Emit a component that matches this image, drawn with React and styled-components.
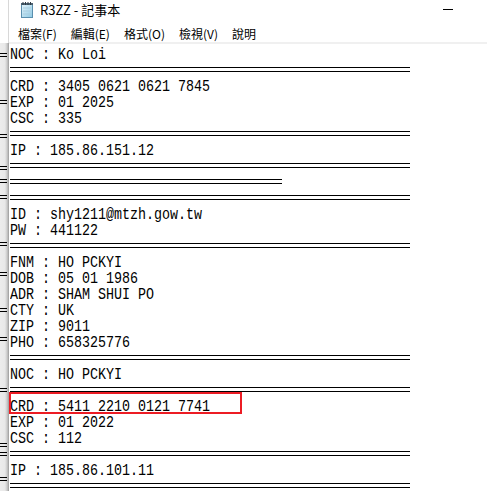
import React from 'react';
import styled, { createGlobalStyle } from 'styled-components';

const GlobalStyle = createGlobalStyle`
  html, body { margin: 0; padding: 0; background: #ffffff; }
  body { font-family: "Noto Sans CJK TC", "Noto Sans", sans-serif; }
`;

const Screen = styled.div`
  display: flex;
  width: 487px;
  height: 491px;
  overflow: hidden;
  background: #ffffff;
`;

const BackWindow = styled.div`
  flex: 0 0 9px;
  display: flex;
  flex-direction: column;
`;

const BackTop = styled.div`
  height: 43px;
  background: #ffffff;
  border-right: 1px solid #d8d8d8;
  box-sizing: border-box;
`;

const BackBody = styled.div`
  flex: 1;
  display: flex;
  flex-direction: column;
  padding-top: 1px;
  background: linear-gradient(to right, #ececec 0%, #e8e8e8 55%, #c8c8c8 80%, #9a9a9a 100%);
`;

const BackRule = styled.div`
  flex: 0 0 auto;
  width: 7px;
  height: 4px;
  margin-top: ${p => p.$gap}px;
  box-sizing: border-box;
  border-top: 1px solid #000;
  border-bottom: 1px solid #000;
`;

const Window = styled.div`
  flex: 1;
  display: flex;
  flex-direction: column;
  min-width: 0;
`;

const TitleBar = styled.div`
  height: 26px;
  display: flex;
  align-items: center;
  padding-left: 11px;
  padding-bottom: 6px;
  box-sizing: border-box;
`;

const Title = styled.span`
  margin-left: 6px;
  font-size: 13px;
  color: #000;
  white-space: nowrap;
`;

const Caption = styled.div`
  margin-left: auto;
  display: flex;
  padding-right: 16px;
  align-self: flex-start;
`;

const CaptionButton = styled.div`
  width: 46px;
  height: 19px;
  display: flex;
  align-items: center;
  justify-content: center;
`;

const MinGlyph = styled.div`
  width: 10px;
  height: 1px;
  background: #000;
`;

const MenuBar = styled.div`
  height: 19px;
  display: flex;
  align-items: center;
  padding-left: 2px;
  border-bottom: 2px solid #f0f0f0;
  box-sizing: border-box;
`;

const MenuItem = styled.span`
  padding: 0 7px;
  font-size: 12px;
  color: #000;
  white-space: nowrap;
`;

const Editor = styled.div`
  flex: 1;
  padding-left: 1px;
  background: #ffffff;
`;

const TextRow = styled.div`
  position: relative;
  height: 16px;
  line-height: 16px;
  white-space: pre;
  color: #000;
`;

const Glyphs = styled.span`
  display: inline-block;
  font-family: "Liberation Mono", "DejaVu Sans Mono", monospace;
  font-size: 16px;
  transform: scaleX(0.8333);
  transform-origin: left center;
`;

const RuleRow = styled.div`
  height: 16px;
  box-sizing: border-box;
  padding-top: 7px;
`;

const DoubleRule = styled.div`
  width: ${p => p.$w}px;
  height: 5px;
  box-sizing: border-box;
  border-top: 1px solid #000;
  border-bottom: 1px solid #000;
`;

const Highlight = styled.div`
  position: absolute;
  left: -1px;
  top: -4px;
  width: 233px;
  height: 22px;
  box-sizing: border-box;
  border: 2px solid #ec1c24;
  pointer-events: none;
`;

const NotepadIcon = () => (
  <svg width="14" height="16" viewBox="0 0 14 16">
    <defs>
      <linearGradient id="pg" x1="0" y1="0" x2="1" y2="1">
        <stop offset="0" stopColor="#e4f4fb" />
        <stop offset="1" stopColor="#8ec9e3" />
      </linearGradient>
    </defs>
    <rect x="1.5" y="2.5" width="11" height="13" fill="url(#pg)" stroke="#5a8fae" />
    <line x1="3" y1="6" x2="11" y2="6" stroke="#a9cde0" />
    <line x1="3" y1="9" x2="11" y2="9" stroke="#a9cde0" />
    <line x1="3" y1="12" x2="11" y2="12" stroke="#a9cde0" />
    <rect x="1" y="1" width="12" height="2" fill="#4c6272" />
    {[2.5, 5, 7.5, 10].map(x => (
      <rect key={x} x={x} y="0" width="1" height="3" fill="#2f3b44" />
    ))}
  </svg>
);

const menus = ['檔案(F)', '編輯(E)', '格式(O)', '檢視(V)', '說明'];

const lines = [
  { t: 'NOC : Ko Loi' },
  { rule: 400 },
  { t: 'CRD : 3405 0621 0621 7845' },
  { t: 'EXP : 01 2025' },
  { t: 'CSC : 335' },
  { rule: 400 },
  { t: 'IP : 185.86.151.12' },
  { rule: 400 },
  { rule: 272 },
  { rule: 400 },
  { t: 'ID : shy1211@mtzh.gow.tw' },
  { t: 'PW : 441122' },
  { rule: 400 },
  { t: 'FNM : HO PCKYI' },
  { t: 'DOB : 05 01 1986' },
  { t: 'ADR : SHAM SHUI PO' },
  { t: 'CTY : UK' },
  { t: 'ZIP : 9011' },
  { t: 'PHO : 658325776' },
  { rule: 400 },
  { t: 'NOC : HO PCKYI' },
  { rule: 400 },
  { t: 'CRD : 5411 2210 0121 7741', mark: true },
  { t: 'EXP : 01 2022' },
  { t: 'CSC : 112' },
  { rule: 400 },
  { t: 'IP : 185.86.101.11' },
  { rule: 400 },
];

// edge of the window behind: gaps between its visible "═" fragments
const backGaps = [9, 43, 30, 28, 9, 12, 43, 26, 32, 25, 47, 51, 5, 21];

export default function App() {
  return (
    <>
      <GlobalStyle />
      <Screen>
        <BackWindow>
          <BackTop />
          <BackBody>
            {backGaps.map((g, i) => (
              <BackRule key={i} $gap={g} />
            ))}
          </BackBody>
        </BackWindow>
        <Window>
          <TitleBar>
            <NotepadIcon />
            <Title>R3ZZ - 記事本</Title>
            <Caption>
              <CaptionButton>
                <MinGlyph />
              </CaptionButton>
            </Caption>
          </TitleBar>
          <MenuBar>
            {menus.map(m => (
              <MenuItem key={m}>{m}</MenuItem>
            ))}
          </MenuBar>
          <Editor>
            {lines.map((l, i) =>
              l.rule ? (
                <RuleRow key={i}>
                  <DoubleRule $w={l.rule} />
                </RuleRow>
              ) : (
                <TextRow key={i}>
                  <Glyphs>{l.t}</Glyphs>
                  {l.mark && <Highlight />}
                </TextRow>
              )
            )}
          </Editor>
        </Window>
      </Screen>
    </>
  );
}
